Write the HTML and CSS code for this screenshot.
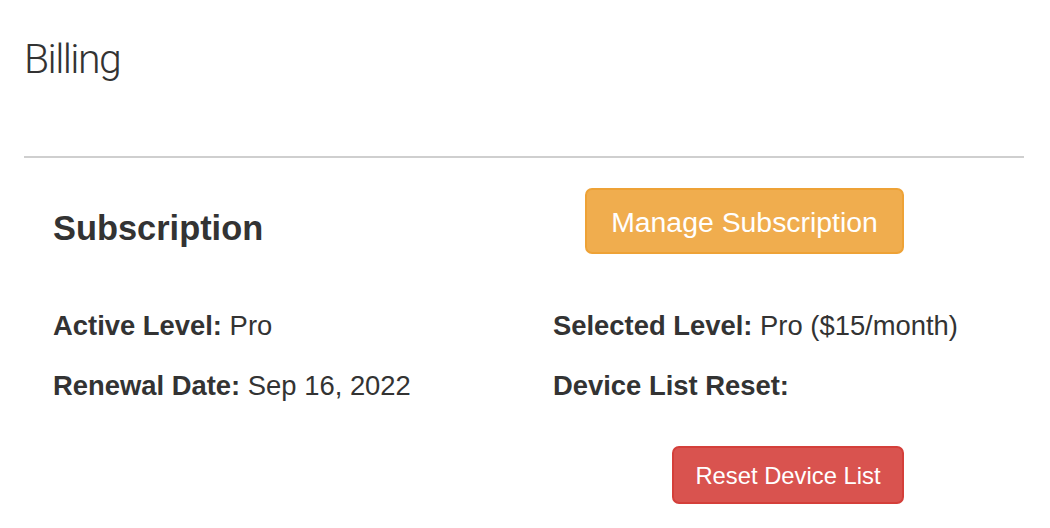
FILE: index.html
```html
<!DOCTYPE html>
<html>
<head>
<meta charset="utf-8">
<link rel="stylesheet" href="styles.css">
</head>
<body>
<div class="page">
  <h1 class="title">Billing</h1>
  <hr class="divider">
  <section class="panel">
    <div class="row head-row">
      <div class="col">
        <h4 class="section-title">Subscription</h4>
      </div>
      <div class="col col-right">
        <button class="btn btn-warning">Manage Subscription</button>
      </div>
    </div>
    <div class="row info-row">
      <div class="col">
        <p class="info"><strong>Active Level:</strong> Pro</p>
        <p class="info"><strong>Renewal Date:</strong> Sep 16, 2022</p>
      </div>
      <div class="col">
        <p class="info"><strong>Selected Level:</strong> Pro ($15/month)</p>
        <p class="info"><strong>Device List Reset:</strong></p>
        <div class="btn-wrap">
          <button class="btn btn-danger btn-sm">Reset Device List</button>
        </div>
      </div>
    </div>
  </section>
</div>
</body>
</html>
```

FILE: styles.css
```css
* { box-sizing: border-box; }
html, body { margin: 0; padding: 0; background: #fff; }
body {
  font-family: "Liberation Sans", Arial, sans-serif;
  color: #333;
  font-size: 27.4px;
}
.page {
  width: 1050px;
  padding: 0 26px 0 24px;
}
.title {
  margin: 36px 0 0;
  font-family: Roboto, "Liberation Sans", sans-serif;
  font-weight: 300;
  font-size: 41px;
  line-height: 46px;
  letter-spacing: -1.6px;
  color: #333;
}
.divider {
  margin: 74px 0 0;
  border: 0;
  border-top: 2px solid #cfcfcf;
  height: 0;
}
.panel {
  padding: 0 29px;
}
.row {
  display: flex;
}
.col {
  width: 500px;
  flex: none;
}
.col:last-child { width: 442px; }
.head-row {
  margin-top: 30px;
  align-items: flex-start;
}
.section-title {
  margin: 22px 0 0;
  font-size: 34.4px;
  line-height: 37px;
  font-weight: bold;
}
.col-right {
  display: flex;
  justify-content: flex-end;
  padding-right: 91px;
}
.btn {
  font-family: "Liberation Sans", Arial, sans-serif;
  color: #fff;
  border-radius: 7px;
  cursor: pointer;
  padding: 0;
}
.btn-warning {
  width: 319px;
  height: 66px;
  background: #f0ad4e;
  border: 2px solid #eea236;
  font-size: 28.4px;
  padding-top: 2px;
}
.info-row {
  margin-top: 42px;
}
.info {
  margin: 0;
  height: 60px;
  line-height: 60px;
  white-space: nowrap;
}
.info strong { font-weight: bold; }
.btn-wrap {
  display: flex;
  justify-content: flex-end;
  padding-right: 91px;
  margin-top: 30px;
}
.btn-danger {
  width: 232px;
  height: 58px;
  background: #d9534f;
  border: 2px solid #d43f3a;
  font-size: 23.8px;
  padding-top: 2px;
}
```
